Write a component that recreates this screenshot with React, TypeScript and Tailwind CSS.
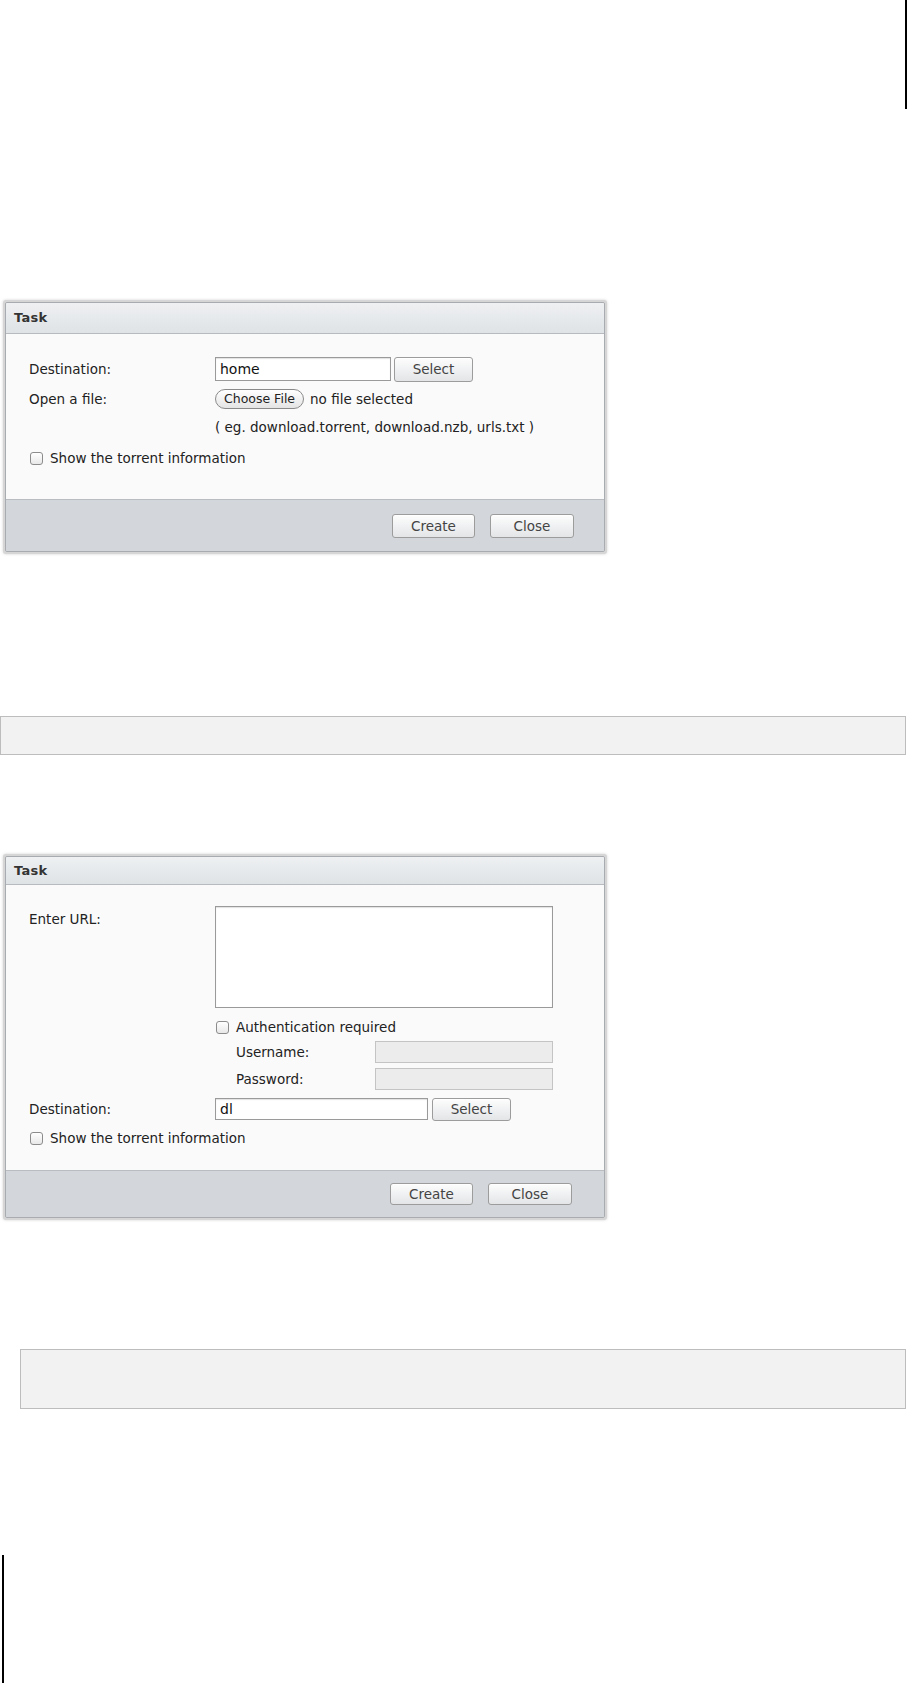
import React from "react";

const font = { fontFamily: '"DejaVu Sans", "Lucida Grande", Verdana, sans-serif' };

function Checkbox() {
  return (
    <span className="inline-block w-[13px] h-[13px] rounded-[3px] border border-[#8c8c8c] bg-gradient-to-b from-white to-[#e8e8e8] shrink-0" />
  );
}

function Btn({ label, w, h }: { label: string; w: string; h: string }) {
  return (
    <div
      className={`${w} ${h} flex items-center justify-center rounded-[3px] border border-[#9c9c9c] bg-gradient-to-b from-[#fdfdfd] to-[#e3e5e7] text-[13.5px] text-[#444] shadow-[inset_0_1px_0_#fff]`}
    >
      {label}
    </div>
  );
}

function Frame({ children }: { children: React.ReactNode }) {
  return (
    <div className="ml-[3px] w-[604px] p-[2px] bg-[#d6d6d6] rounded-[3px] shadow-[0_0_3px_rgba(0,0,0,0.18)]">
      <div className="border border-[#a8acb0] rounded-[2px] overflow-hidden">{children}</div>
    </div>
  );
}

function Header({ h }: { h: string }) {
  return (
    <div
      className={`${h} flex items-center pl-[8px] bg-gradient-to-b from-[#eef0f2] to-[#dfe3e6] border-b border-[#b7bbbf] text-[13px] tracking-[0.3px] font-bold text-[#333]`}
    >
      Task
    </div>
  );
}

function Footer({ h, pt, pr, btnH }: { h: string; pt: string; pr: string; btnH: string }) {
  return (
    <div className={`${h} ${pt} ${pr} flex justify-end gap-[15px] bg-[#d3d7db] border-t border-[#b9bdc1]`}>
      <Btn label="Create" w="w-[83px]" h={btnH} />
      <Btn label="Close" w="w-[84px]" h={btnH} />
    </div>
  );
}

export default function App() {
  return (
    <div className="w-[907px] bg-white text-[#222]" style={font}>
      {/* top right line */}
      <div className="flex">
        <div className="ml-auto w-[2px] h-[109px] bg-black" />
      </div>

      {/* Dialog 1 */}
      <div className="mt-[191px]">
        <Frame>
          <Header h="h-[31px]" />
          <div className="h-[165px] bg-[#fafafa] pl-[23px] pt-[23px] text-[13.5px]">
            <div className="flex items-center h-[24px]">
              <div className="w-[186px]">Destination:</div>
              <div className="w-[176px] h-[24px] border border-[#9a9a9a] bg-white flex items-center pl-[4px] text-[14px] text-[#111] shadow-[inset_0_1px_1px_rgba(0,0,0,0.12)]">
                home
              </div>
              <div className="ml-[3px]">
                <Btn label="Select" w="w-[79px]" h="h-[25px]" />
              </div>
            </div>
            <div className="flex items-center h-[20px] mt-[8px]">
              <div className="w-[186px]">Open a file:</div>
              <div className="h-[20px] px-[8px] rounded-full border border-[#8a8a8a] bg-gradient-to-b from-white to-[#e4e4e4] flex items-center text-[12.5px] text-[#222]">
                Choose File
              </div>
              <div className="ml-[6px]">no file selected</div>
            </div>
            <div className="flex items-center h-[16px] mt-[10px]">
              <div className="w-[186px]" />
              <div>( eg. download.torrent, download.nzb, urls.txt )</div>
            </div>
            <div className="flex items-center h-[16px] mt-[15px] pl-[1px] gap-[7px]">
              <Checkbox />
              <span>Show the torrent information</span>
            </div>
          </div>
          <Footer h="h-[52px]" pt="pt-[14px]" pr="pr-[30px]" btnH="h-[24px]" />
        </Frame>
      </div>

      {/* Gray bar 1 */}
      <div className="mt-[162px] h-[39px] w-[906px] border border-[#bdbdbd] bg-[#f2f2f2]" />

      {/* Dialog 2 */}
      <div className="mt-[99px]">
        <Frame>
          <Header h="h-[28px]" />
          <div className="h-[285px] bg-[#fafafa] pl-[23px] pt-[21px] text-[13.5px]">
            <div className="flex">
              <div className="w-[186px] pt-[3px]">Enter URL:</div>
              <div className="w-[338px] h-[102px] border border-[#9a9a9a] bg-white shadow-[inset_0_1px_1px_rgba(0,0,0,0.12)]" />
            </div>
            <div className="flex items-center h-[16px] mt-[11px]">
              <div className="w-[187px]" />
              <Checkbox />
              <span className="ml-[7px]">Authentication required</span>
            </div>
            <div className="flex items-center h-[22px] mt-[6px]">
              <div className="w-[207px]" />
              <div className="w-[139px]">Username:</div>
              <div className="w-[178px] h-[22px] border border-[#c4c4c4] bg-[#ececec]" />
            </div>
            <div className="flex items-center h-[22px] mt-[5px]">
              <div className="w-[207px]" />
              <div className="w-[139px]">Password:</div>
              <div className="w-[178px] h-[22px] border border-[#c4c4c4] bg-[#ececec]" />
            </div>
            <div className="flex items-center h-[22px] mt-[8px]">
              <div className="w-[186px]">Destination:</div>
              <div className="w-[213px] h-[22px] border border-[#9a9a9a] bg-white flex items-center pl-[4px] text-[14px] text-[#111] shadow-[inset_0_1px_1px_rgba(0,0,0,0.12)]">
                dl
              </div>
              <div className="ml-[4px]">
                <Btn label="Select" w="w-[79px]" h="h-[23px]" />
              </div>
            </div>
            <div className="flex items-center h-[16px] mt-[10px] pl-[1px] gap-[7px]">
              <Checkbox />
              <span>Show the torrent information</span>
            </div>
          </div>
          <Footer h="h-[47px]" pt="pt-[12px]" pr="pr-[32px]" btnH="h-[22px]" />
        </Frame>
      </div>

      {/* Gray bar 2 */}
      <div className="mt-[129px] ml-[20px] h-[60px] w-[886px] border border-[#bdbdbd] bg-[#f2f2f2]" />

      {/* bottom left line */}
      <div className="mt-[146px] ml-[2px] w-[2px] h-[128px] bg-black" />
    </div>
  );
}
